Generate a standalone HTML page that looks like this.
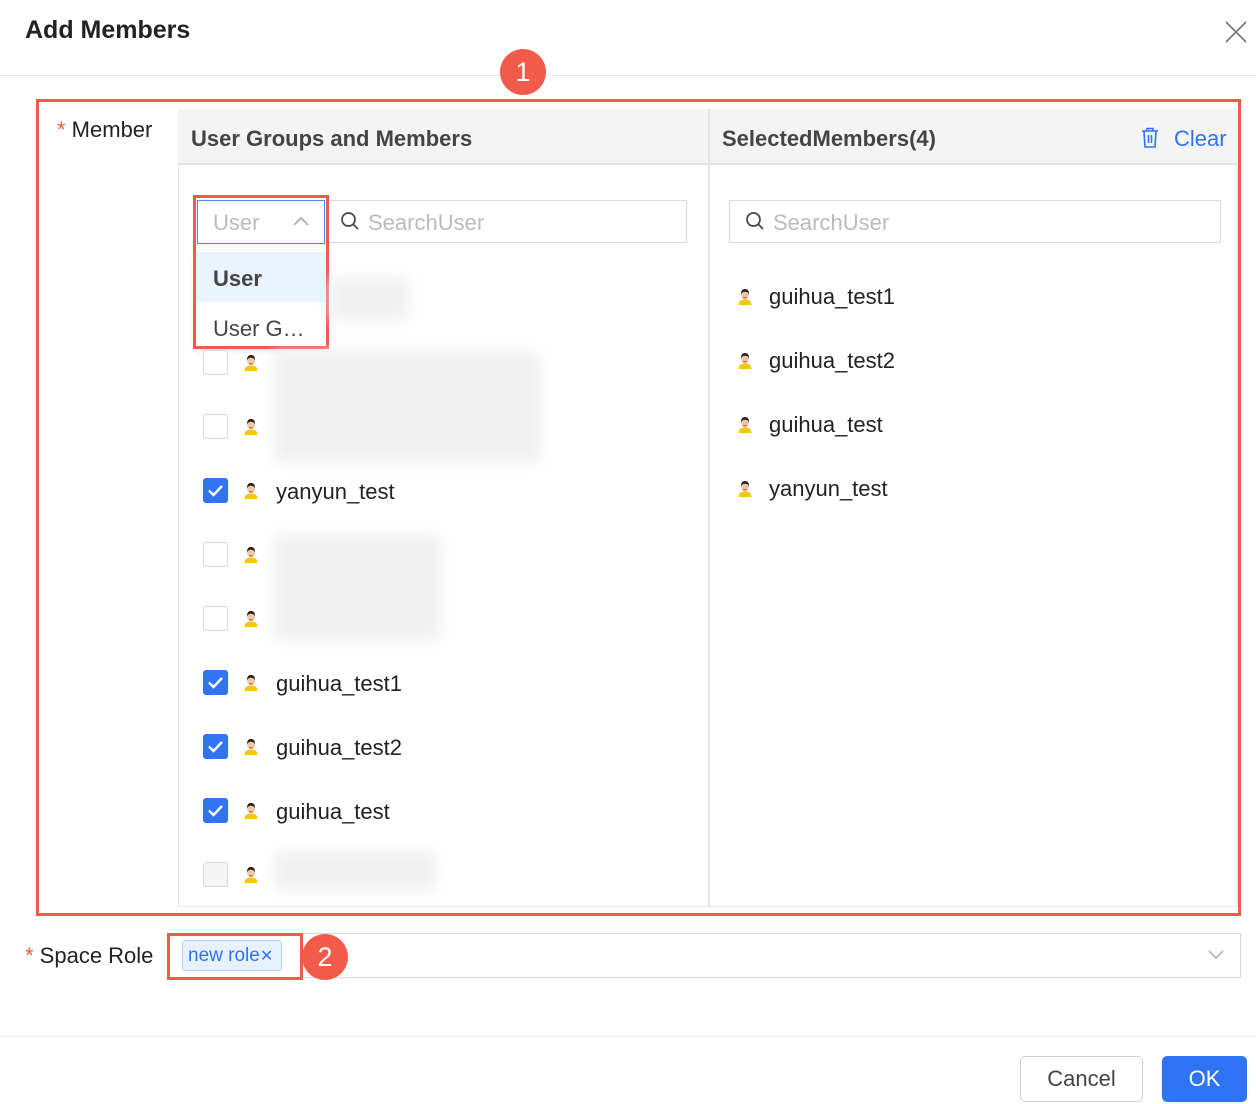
<!DOCTYPE html>
<html><head><meta charset="utf-8"><style>
*{box-sizing:border-box;margin:0;padding:0}
body{width:1256px;height:1104px;background:#fff;font-family:"Liberation Sans",Arial,sans-serif;position:relative;overflow:hidden;color:#333}
.a{position:absolute}
.t{font-size:22px;color:#222;white-space:nowrap}
.cb{position:absolute;left:203px;width:25px;height:25px;border:1px solid #d9d9d9;border-radius:3px;background:#fff}
.cb.on{background:#2f74f5;border-color:#2f74f5}
.av{position:absolute;width:18px;height:18px}
.blur{position:absolute;background:#f0f0f0;filter:blur(6px)}
</style></head><body>
<svg width="0" height="0" style="position:absolute"><defs>
<symbol id="av" viewBox="0 0 18 18"><circle cx="9" cy="9" r="9" fill="#fff"/><path d="M2.5 18c0-4 2.5-5.5 6.5-5.5s6.5 1.5 6.5 5.5z" fill="#f5c518"/><ellipse cx="9" cy="8" rx="3.9" ry="4.5" fill="#f2c4a8"/><path d="M5 7.5C4.8 3.2 7 2 9 2s4.2 1 4 5.5C12.2 5.3 10.5 4.8 9 4.8S5.8 5.3 5 7.5z" fill="#222"/><path d="M7.3 10.3q1.7 1.2 3.4 0" stroke="#c44" stroke-width=".9" fill="none"/></symbol>
<symbol id="ck" viewBox="0 0 25 25"><path d="M6 12.5l4.5 4.5L19 8" stroke="#fff" stroke-width="2.4" fill="none"/></symbol>
</defs></svg>

<div class="a" style="left:25px;top:16px;font-size:25px;font-weight:bold;color:#222">Add Members</div>
<svg class="a" style="left:1224px;top:20px" width="24" height="24"><path d="M2 2L22 22M22 2L2 22" stroke="#777" stroke-width="1.6"/></svg>
<div class="a" style="left:0;top:75px;width:1256px;height:1px;background:#e5e5e5"></div>

<div class="a" style="left:500px;top:49px;width:46px;height:46px;border-radius:50%;background:#f25a4a;color:#fff;font-size:27px;text-align:center;line-height:46px">1</div>

<div class="a" style="left:57px;top:117px;font-size:22px;color:#222"><span style="color:#f25a4a">*</span> Member</div>

<div class="a" style="left:178px;top:109px;width:1060px;height:798px;border:1px solid #e5e5e5"></div>
<div class="a" style="left:178px;top:109px;width:1060px;height:56px;background:#f4f4f4;border-bottom:2px solid #e3e3e3"></div>
<div class="a" style="left:708px;top:109px;width:2px;height:798px;background:#e5e5e5"></div>
<div class="a" style="left:191px;top:126px;font-size:22px;font-weight:bold;color:#444">User Groups and Members</div>
<div class="a" style="left:722px;top:126px;font-size:22px;font-weight:bold;color:#444">SelectedMembers(4)</div>
<svg class="a" style="left:1141px;top:127px" width="18" height="21"><path d="M1 4h16M6 4V1.5h6V4M3 4l1 16h10l1-16M7.5 8v8M10.5 8v8" stroke="#2f74f5" stroke-width="1.6" fill="none"/></svg>
<div class="a" style="left:1174px;top:126px;font-size:22px;color:#2f74f5">Clear</div>

<div class="a" style="left:327px;top:200px;width:360px;height:43px;border:1px solid #d9d9d9"></div>
<svg class="a" style="left:340px;top:211px" width="20" height="20"><circle cx="8.5" cy="8.5" r="6.5" stroke="#444" stroke-width="1.7" fill="none"/><path d="M13.5 13.5L18 18" stroke="#444" stroke-width="1.7"/></svg>
<div class="a" style="left:368px;top:210px;font-size:22px;color:#bbb">SearchUser</div>
<div class="a" style="left:197px;top:200px;width:128px;height:44px;border:1px solid #4a8af5;background:#fff"></div>
<div class="a" style="left:213px;top:210px;font-size:22px;color:#bbb">User</div>
<svg class="a" style="left:292px;top:215px" width="18" height="12"><path d="M2 10L9 3l7 7" stroke="#aaa" stroke-width="1.6" fill="none"/></svg>
<div class="a" style="left:196px;top:251px;width:130px;height:97px;background:#fff;box-shadow:0 2px 6px rgba(0,0,0,.15)"></div>
<div class="a" style="left:196px;top:252px;width:130px;height:50px;background:#eaf3fe"></div>
<div class="a" style="left:213px;top:266px;font-size:22px;font-weight:bold;color:#444">User</div>
<div class="a" style="left:213px;top:316px;font-size:22px;color:#444">User G…</div>
<div class="a" style="left:193px;top:195px;width:136px;height:154px;border:3px solid #f25a4a"></div>

<div class="blur" style="left:330px;top:278px;width:78px;height:42px"></div>
<div class="blur" style="left:275px;top:352px;width:265px;height:110px"></div>
<div class="blur" style="left:275px;top:535px;width:165px;height:105px"></div>
<div class="blur" style="left:275px;top:852px;width:160px;height:38px"></div>

<div class="cb" style="top:350px"></div><svg class="av" style="left:242px;top:353px"><use href="#av"/></svg>
<div class="cb" style="top:414px"></div><svg class="av" style="left:242px;top:417px"><use href="#av"/></svg>
<div class="cb on" style="top:478px"><svg width="25" height="25" style="margin:-1px"><use href="#ck"/></svg></div><svg class="av" style="left:242px;top:481px"><use href="#av"/></svg><div class="a t" style="left:276px;top:479px">yanyun_test</div>
<div class="cb" style="top:542px"></div><svg class="av" style="left:242px;top:545px"><use href="#av"/></svg>
<div class="cb" style="top:606px"></div><svg class="av" style="left:242px;top:609px"><use href="#av"/></svg>
<div class="cb on" style="top:670px"><svg width="25" height="25" style="margin:-1px"><use href="#ck"/></svg></div><svg class="av" style="left:242px;top:673px"><use href="#av"/></svg><div class="a t" style="left:276px;top:671px">guihua_test1</div>
<div class="cb on" style="top:734px"><svg width="25" height="25" style="margin:-1px"><use href="#ck"/></svg></div><svg class="av" style="left:242px;top:737px"><use href="#av"/></svg><div class="a t" style="left:276px;top:735px">guihua_test2</div>
<div class="cb on" style="top:798px"><svg width="25" height="25" style="margin:-1px"><use href="#ck"/></svg></div><svg class="av" style="left:242px;top:801px"><use href="#av"/></svg><div class="a t" style="left:276px;top:799px">guihua_test</div>
<div class="cb" style="top:862px;background:#f5f5f5"></div><svg class="av" style="left:242px;top:865px"><use href="#av"/></svg>

<div class="a" style="left:729px;top:200px;width:492px;height:43px;border:1px solid #d9d9d9"></div>
<svg class="a" style="left:745px;top:211px" width="20" height="20"><circle cx="8.5" cy="8.5" r="6.5" stroke="#444" stroke-width="1.7" fill="none"/><path d="M13.5 13.5L18 18" stroke="#444" stroke-width="1.7"/></svg>
<div class="a" style="left:773px;top:210px;font-size:22px;color:#bbb">SearchUser</div>
<svg class="av" style="left:736px;top:287px"><use href="#av"/></svg><div class="a t" style="left:769px;top:284px">guihua_test1</div>
<svg class="av" style="left:736px;top:351px"><use href="#av"/></svg><div class="a t" style="left:769px;top:348px">guihua_test2</div>
<svg class="av" style="left:736px;top:415px"><use href="#av"/></svg><div class="a t" style="left:769px;top:412px">guihua_test</div>
<svg class="av" style="left:736px;top:479px"><use href="#av"/></svg><div class="a t" style="left:769px;top:476px">yanyun_test</div>

<div class="a" style="left:36px;top:99px;width:1205px;height:817px;border:3px solid #f25a4a"></div>

<div class="a" style="left:25px;top:943px;font-size:22px;color:#222"><span style="color:#f25a4a">*</span> Space Role</div>
<div class="a" style="left:167px;top:933px;width:1074px;height:45px;border:1px solid #d9d9d9"></div>
<svg class="a" style="left:1207px;top:949px" width="18" height="12"><path d="M2 2l7 7 7-7" stroke="#aaa" stroke-width="1.5" fill="none"/></svg>
<div class="a" style="left:182px;top:940px;width:100px;height:31px;background:#e8f1fe;border:1px solid #b8d3fb;border-radius:3px;color:#2f74f5;font-size:19px;line-height:29px;padding-left:5px;white-space:nowrap">new role<span style="font-size:16px">✕</span></div>
<div class="a" style="left:167px;top:933px;width:136px;height:47px;border:3px solid #f25a4a"></div>
<div class="a" style="left:302px;top:934px;width:46px;height:46px;border-radius:50%;background:#f25a4a;color:#fff;font-size:27px;text-align:center;line-height:46px">2</div>

<div class="a" style="left:0;top:1036px;width:1256px;height:1px;background:#eee"></div>
<div class="a" style="left:1020px;top:1056px;width:123px;height:46px;border:1px solid #d0d0d0;border-radius:5px;font-size:22px;color:#444;text-align:center;line-height:44px">Cancel</div>
<div class="a" style="left:1162px;top:1056px;width:85px;height:46px;background:#2f74f5;border-radius:5px;font-size:22px;color:#fff;text-align:center;line-height:46px">OK</div>
</body></html>
